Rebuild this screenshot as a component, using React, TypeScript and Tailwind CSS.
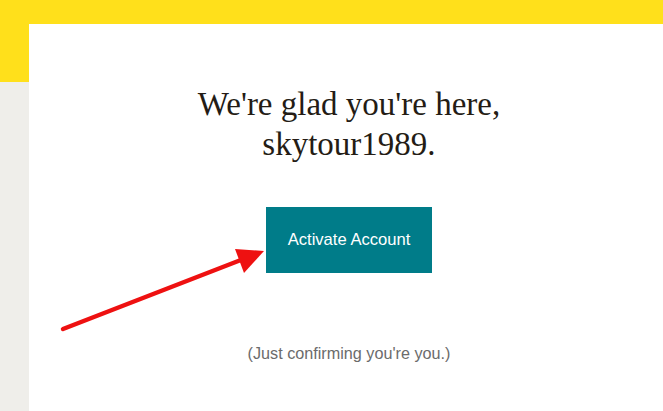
export default function App() {
  return (
    <div className="relative w-[663px] h-[411px] overflow-hidden bg-[#efeeea]">
      <div className="flex flex-col h-full">
        <div className="h-[24px] bg-[#ffe01b] shrink-0" />
        <div className="flex flex-1">
          <div className="w-[29px] shrink-0 flex flex-col">
            <div className="h-[58px] bg-[#ffe01b]" />
            <div className="flex-1 bg-[#efeeea]" />
          </div>
          <div className="flex-1 bg-white flex flex-col items-center pt-[60px] pl-[6px]">
            <h1
              className="text-[33px] leading-[40px] text-[#241c15] text-center"
              style={{ fontFamily: "Georgia, 'Liberation Serif', serif" }}
            >
              We're glad you're here,
              <br />
              skytour1989.
            </h1>
            <button
              className="mt-[43px] w-[166px] h-[66px] bg-[#007c89] text-white text-[16.6px]"
              style={{ fontFamily: "'Liberation Sans', Arial, sans-serif" }}
            >
              Activate Account
            </button>
            <p
              className="mt-[70px] text-[16.2px] leading-[20px] text-[#6b6b6b]"
              style={{ fontFamily: "'Liberation Sans', Arial, sans-serif" }}
            >
              (Just confirming you're you.)
            </p>
          </div>
        </div>
      </div>
      <svg className="absolute left-0 top-0" width="663" height="411">
        <line x1="63" y1="329" x2="246" y2="258" stroke="#ee1111" strokeWidth="4.5" strokeLinecap="round" />
        <polygon points="264,251 235,249 244,273" fill="#ee1111" />
      </svg>
    </div>
  );
}
